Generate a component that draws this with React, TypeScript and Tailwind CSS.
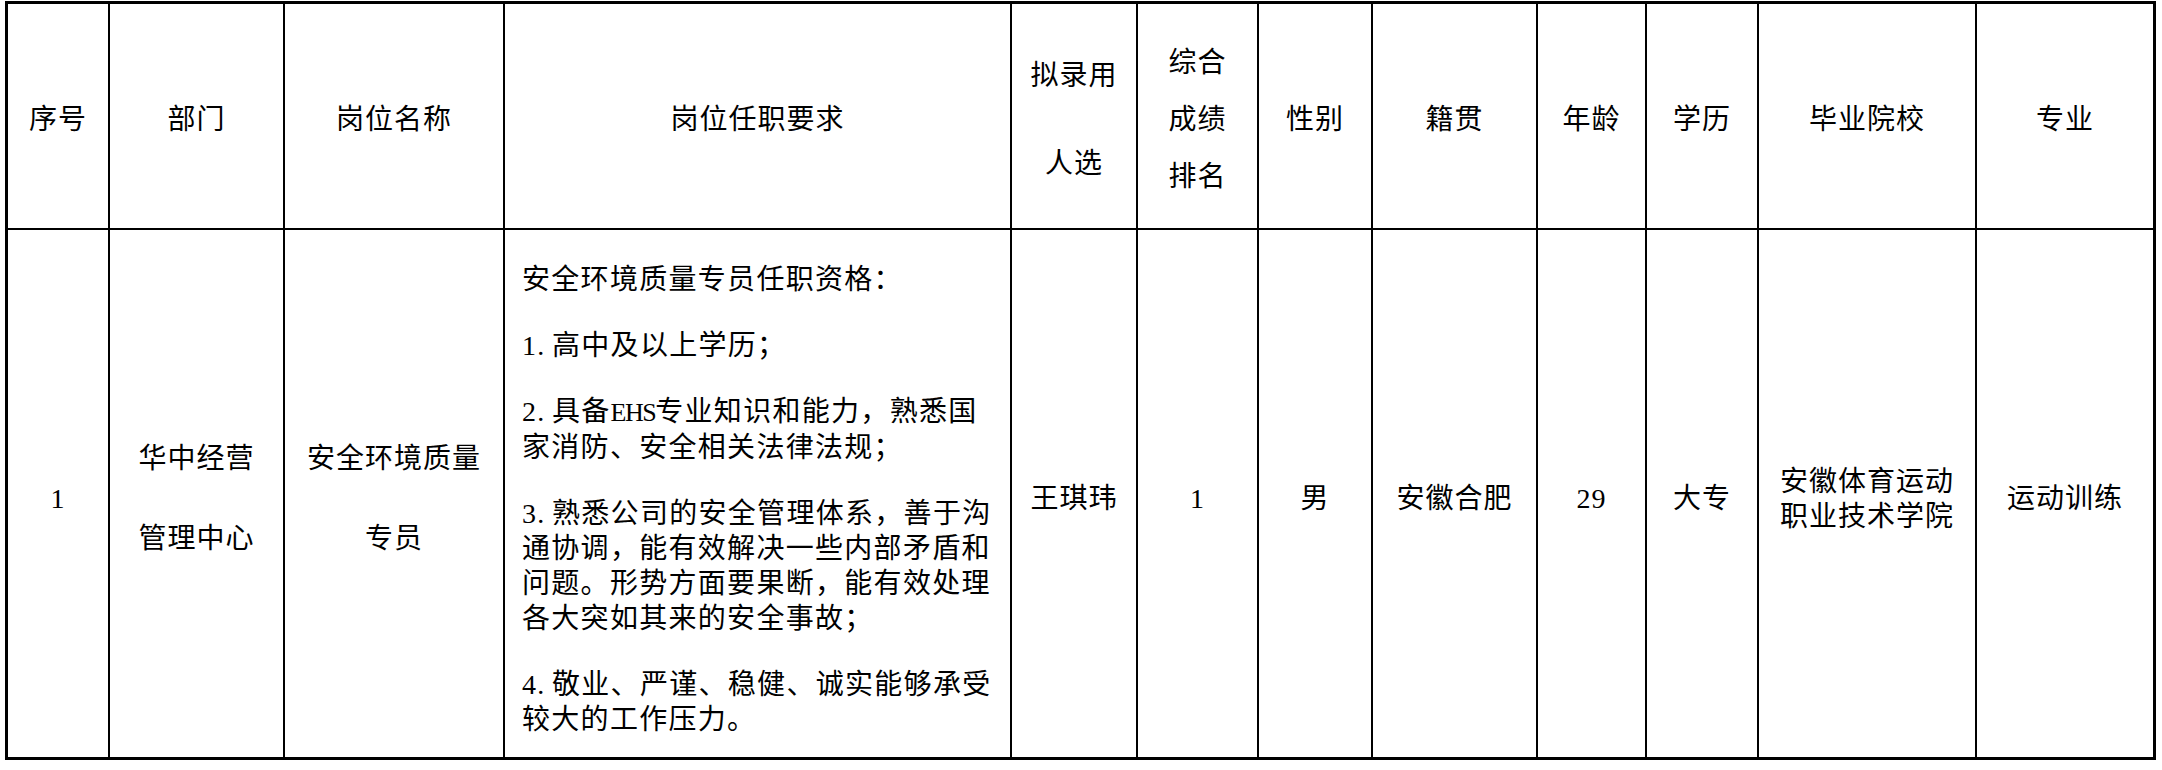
import type { ReactNode } from "react";

// one hiring-result row, laid out like the printed Word table
const reqs: { n: string; lines: ReactNode[] }[] = [
	{ n: "", lines: ["安全环境质量专员任职资格："] },
	{ n: "1.", lines: ["高中及以上学历；"] },
	{
		n: "2.",
		lines: [
			<>
				具备<span className="text-[26px] tracking-[-1.5px]">EHS</span>专业知识和能力，熟悉国
			</>,
			"家消防、安全相关法律法规；",
		],
	},
	{
		n: "3.",
		lines: ["熟悉公司的安全管理体系，善于沟", "通协调，能有效解决一些内部矛盾和", "问题。形势方面要果断，能有效处理", "各大突如其来的安全事故；"],
	},
	{ n: "4.", lines: ["敬业、严谨、稳健、诚实能够承受", "较大的工作压力。"] },
];

function Head({ children, className = "" }: { children: ReactNode; className?: string }) {
	return <div className={`flex flex-col items-center justify-center bg-white pt-[7px] text-center ${className}`}>{children}</div>;
}

function Body({ children, className = "" }: { children: ReactNode; className?: string }) {
	return <div className={`flex flex-col items-center justify-center bg-white pt-[10px] text-center ${className}`}>{children}</div>;
}

export default function App() {
	return (
		<div className="min-h-screen bg-white font-['Liberation_Serif','Noto_Sans_CJK_SC',serif] text-[28px] leading-[35px] tracking-[1px] text-black">
			<div className="mt-[1px] ml-[5px] grid w-fit grid-cols-[100px_173px_218px_505px_124px_119px_112px_163px_107px_110px_216px_176px] grid-rows-[224px_527px] gap-[2px] border-[3px] border-black bg-black">
				<Head>序号</Head>
				<Head>部门</Head>
				<Head>岗位名称</Head>
				<Head>岗位任职要求</Head>
				<Head className="leading-[88px]">
					<span>拟录用</span>
					<span>人选</span>
				</Head>
				<Head className="leading-[57px]">
					<span>综合</span>
					<span>成绩</span>
					<span>排名</span>
				</Head>
				<Head>性别</Head>
				<Head>籍贯</Head>
				<Head>年龄</Head>
				<Head>学历</Head>
				<Head>毕业院校</Head>
				<Head>专业</Head>

				<Body>1</Body>
				<Body className="leading-[80px]">
					<span>华中经营</span>
					<span>管理中心</span>
				</Body>
				<Body className="leading-[80px]">
					<span>安全环境质量</span>
					<span>专员</span>
				</Body>
				<div className="flex flex-col gap-[31px] bg-white pt-[32px] pl-[17px] tracking-[1.3px] whitespace-nowrap">
					{reqs.map((p, i) => (
						<div key={i}>
							{p.lines.map((l, j) => (
								<div key={j}>
									{j === 0 && p.n && <span className="inline-block w-[30px]">{p.n}</span>}
									{l}
								</div>
							))}
						</div>
					))}
				</div>
				<Body>王琪玮</Body>
				<Body>1</Body>
				<Body>男</Body>
				<Body>安徽合肥</Body>
				<Body>29</Body>
				<Body>大专</Body>
				<Body>
					<span>安徽体育运动</span>
					<span>职业技术学院</span>
				</Body>
				<Body>运动训练</Body>
			</div>
		</div>
	);
}
